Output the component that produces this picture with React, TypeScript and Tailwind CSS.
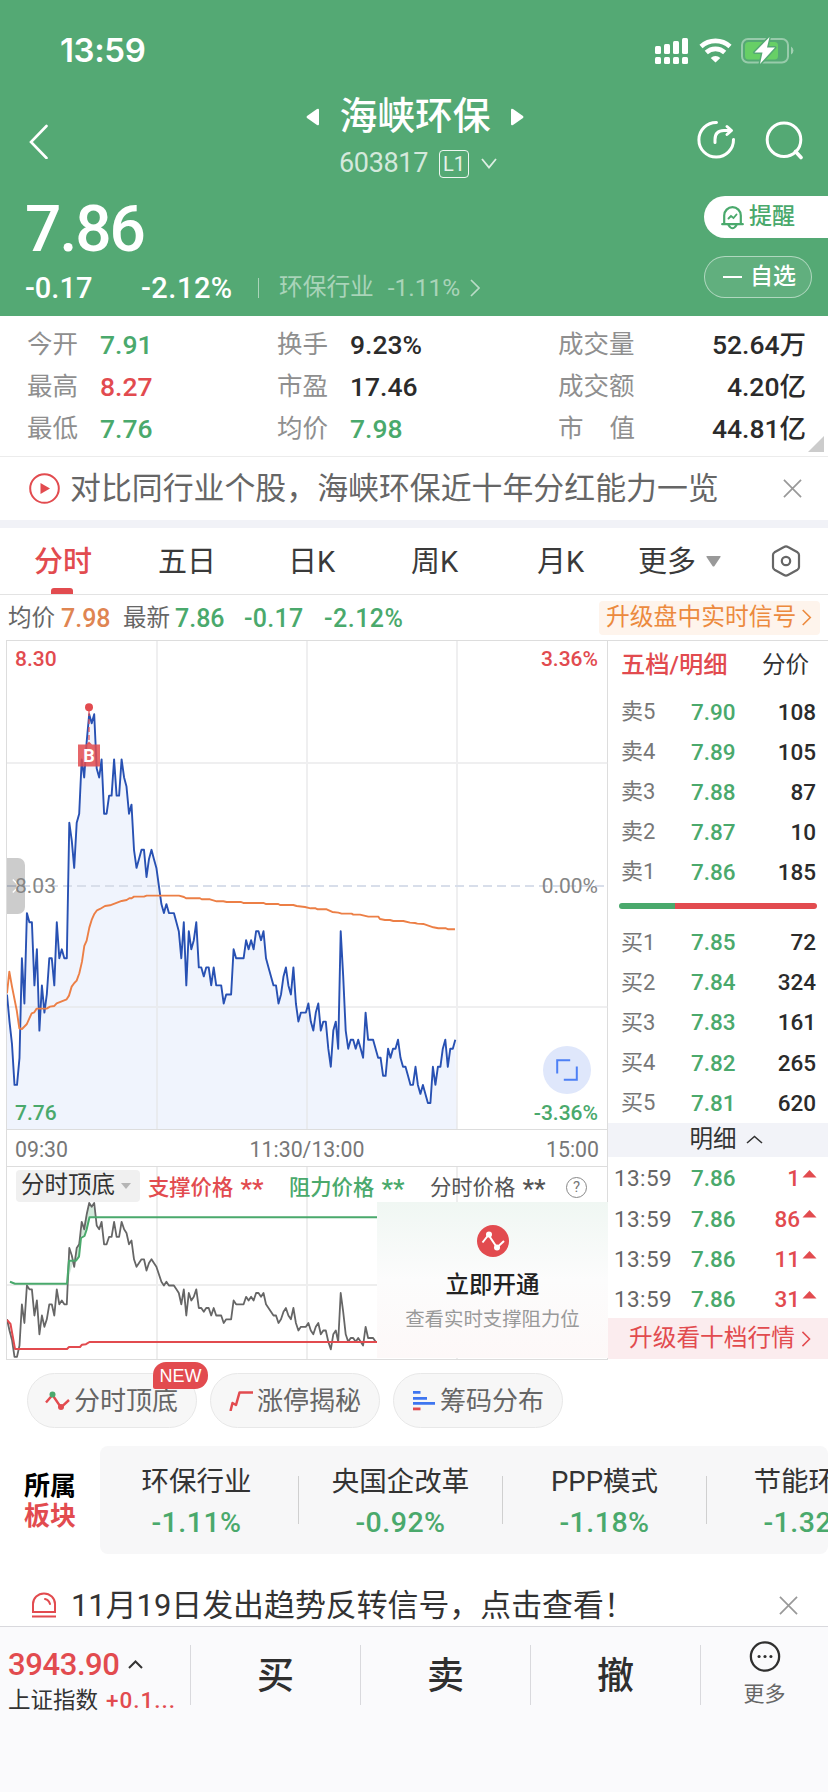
import { ReactNode } from "react";

const SELLS = [
  ["卖5", "7.90", "108"],
  ["卖4", "7.89", "105"],
  ["卖3", "7.88", "87"],
  ["卖2", "7.87", "10"],
  ["卖1", "7.86", "185"],
];

const BUYS = [
  ["买1", "7.85", "72"],
  ["买2", "7.84", "324"],
  ["买3", "7.83", "161"],
  ["买4", "7.82", "265"],
  ["买5", "7.81", "620"],
];

const TRADES = ["1", "86", "11", "31"];

const SECTORS = [
  ["环保行业", "-1.11%"],
  ["央国企改革", "-0.92%"],
  ["PPP模式", "-1.18%"],
  ["节能环保", "-1.32%"],
];

// one value per minute, in cents away from yesterday's close (8.03)
const TICKS = [
  -12, -15, -17.5, -22, -22, -19, -8, -13, -3, -4, -4, -11, -7, -16, -11, -14, -12, -8, -8, -11, -4, -8, -7, -8, -8,
  7, 5, 2, 7, 8, 14, 12, 16, 19, 18, 19, 13, 12, 14, 8, 8, 10, 10, 14, 10, 10, 14, 12, 11, 8, 9, 4, 2, 3, 4, 4, 1, 3,
  4, 3, 2, 0, -2, -3, -2, -3, -3, -3, -4, -5, -8, -4, -11, -5, -7, -6, -4, -9, -9, -10, -9, -9, -11, -9, -11, -11,
  -11, -13, -12, -12, -12, -7, -8, -8, -8, -8, -6, -7, -6, -7, -5, -5, -6, -5, -8, -9, -10, -11, -11, -13, -12, -10,
  -9, -11, -12, -9, -13, -15, -14, -14, -14, -13, -15, -16, -14, -13, -16, -15, -15, -18, -20, -16, -15, -18, -5,
  -10, -16, -18, -17, -17, -18, -17, -18, -19, -14, -17, -17, -17, -18, -19, -19, -21, -21, -18, -19, -18, -18, -17,
  -19, -20, -20, -21, -22, -22, -20, -22, -23, -22, -23, -24, -24, -20, -22, -20, -20, -18, -17, -20, -18, -18, -17,
];

const STEP = 448.3 / (TICKS.length - 1);
const priceLine = TICKS.map((t, i) => `${(7 + i * STEP).toFixed(1)},${(886 - t * 9.04).toFixed(1)}`).join(" ");
// the lower panel is locked right of x=377, so its line stops there
const subLine = TICKS.slice(0, 149)
  .map((t, i) => `${(7 + i * STEP).toFixed(1)},${(1203 + (19 - t) * 3.75).toFixed(1)}`)
  .join(" ");

const AVG_LINE =
  "21,1090 28,1025 36,1070 50,1140 58,1195 66,1197 80,1183 95,1150 103,1147 110,1136 140,1136 150,1130 163,1128 170,1120 200,1108 207,1097 215,1070 223,1059 230,1052 238,1030 246,995 253,948 260,932 268,893 275,870 283,852 291,841 300,837 315,828 330,826 365,813 380,810 388,805 395,805 402,800 432,800 440,797 537,797 552,801 558,805 600,805 605,808 630,808 650,814 670,814 680,816 722,816 730,819 790,819 797,822 835,822 840,825 880,825 890,828 915,831 932,835 947,835 953,838 980,838 997,846 1015,848 1025,851 1055,851 1060,854 1080,854 1105,860 1135,860 1140,867 1155,870 1170,870 1180,873 1210,873 1230,878 1245,879 1252,881 1270,882 1300,892 1315,895 1338,895 1345,898 1365,898";

function Chevron({ className }: { className?: string }) {
  return (
    <svg viewBox="0 0 10 18" className={className} fill="none" stroke="currentColor" strokeWidth="1.7">
      <path d="M1 1l8 8-8 8" />
    </svg>
  );
}

function Close({ className }: { className?: string }) {
  return (
    <svg viewBox="0 0 20 20" className={className} fill="none" stroke="#999" strokeWidth="1.8">
      <path d="M1 1l18 18M19 1L1 19" />
    </svg>
  );
}

function StatusBar() {
  return (
    <div className="flex h-[91px] items-center justify-between pt-[10px] pr-[33px] pl-[60px]">
      <span className="font-['Inter'] text-[33px] font-semibold tracking-[-0.4px]">13:59</span>
      <svg width="140" height="28" viewBox="655 36 140 28" fill="#fff">
        <rect x="655" y="45" width="6" height="8" rx="1.5" />
        <rect x="664" y="43" width="6" height="10" rx="1.5" />
        <rect x="673" y="40" width="6" height="13" rx="1.5" />
        <rect x="682" y="37" width="6" height="16" rx="1.5" />
        <rect x="655" y="56" width="6" height="7" rx="1.5" />
        <rect x="664" y="56" width="6" height="7" rx="1.5" />
        <rect x="673" y="56" width="6" height="7" rx="1.5" />
        <rect x="682" y="56" width="6" height="7" rx="1.5" />
        <g fill="none" stroke="#fff" strokeWidth="4.6">
          <path d="M701 45.5a21.5 21.5 0 0 1 29 0" />
          <path d="M706.3 51.5a13.5 13.5 0 0 1 18.4 0" />
        </g>
        <path d="M710.7 57a7 7 0 0 1 9.6 0l-4.800 4.400z" />
        <rect x="742" y="38" width="46" height="23.5" rx="6" fill="none" stroke="#fff" strokeOpacity=".4" strokeWidth="2" />
        <path d="M791 45.5v8a4.500 4.500 0 0 0 0-8z" opacity=".45" />
        <rect x="745" y="41" width="33" height="17.5" rx="3.5" fill="#67cf66" />
        <path
          d="M769.5 36l-15 15.500h8l-2.500 11.500 15-16.500h-8z"
          stroke="#54a974"
          strokeWidth="3"
          paintOrder="stroke"
          strokeLinejoin="round"
        />
      </svg>
    </div>
  );
}

function Header() {
  return (
    <header className="h-[316px] bg-[#54a974] text-white">
      <StatusBar />
      <div className="flex h-24 items-center justify-between pr-[25px] pl-[29px]">
        <svg className="mt-[3px]" width="98" height="36" viewBox="29 122 98 36" fill="none" stroke="#fff" strokeWidth="2.6">
          <path d="M46.5 125l-15.500 16 15.500 16" strokeLinecap="round" />
        </svg>
        <div className="flex flex-col items-center pl-[6px]">
          <div className="flex h-12 items-center gap-[20px] pt-[3px]">
            <svg width="13" height="18" viewBox="0 0 13 18" fill="#fff">
              <path d="M13 2v14q0 2-2 1L1 10q-1-1 0-2L11 1q2-1 2 1z" />
            </svg>
            <h1 className="text-[37.8px] leading-none font-medium">海峡环保</h1>
            <svg width="13" height="18" viewBox="0 0 13 18" fill="#fff">
              <path d="M0 2v14q0 2 2 1l10-7q1-1 0-2L2 1Q0 0 0 2z" />
            </svg>
          </div>
          <div className="flex h-12 items-center pt-px pl-1.5">
            <span className="text-[27px] tracking-[-0.35px] text-white/75">603817</span>
            <span className="ml-[11px] flex h-7 w-[30px] items-center justify-center rounded-[4px] border border-white/90 text-[20px] text-white/85">
              L1
            </span>
            <svg className="ml-3 text-white/80" width="16" height="11" viewBox="0 0 16 11" fill="none" stroke="currentColor" strokeWidth="1.8">
              <path d="M1 1l7 8.500L15 1" />
            </svg>
          </div>
        </div>
        <svg
          className="mt-[2px]"
          width="106"
          height="42"
          viewBox="697 119 106 42"
          fill="none"
          stroke="#fff"
          strokeWidth="3"
          strokeLinecap="round"
        >
          <path d="M716.5 122.500a17.300 17.300 0 1 0 17 17" />
          <path d="M715 142.500v-3c0-6 3-9 9-9h6" />
          <path d="M727 126.500l4.500 4-4.500 4" strokeLinejoin="round" />
          <circle cx="784" cy="139.8" r="16.8" />
          <path d="M795.5 151.500l5.500 6" strokeWidth="3.6" />
        </svg>
      </div>
      <div className="flex h-[129px] justify-between">
        <div className="pl-[25px]">
          <div className="flex h-[82px] items-center pt-[4px] text-[64px] leading-none font-medium tracking-[-2px]">7.86</div>
          <div className="flex h-9 items-center pt-[2px] text-[29px] leading-none font-medium">
            <span className="w-[116px]">-0.17</span>
            <span className="w-[117px] tracking-[0.5px]">-2.12%</span>
            <span className="h-5 w-px bg-white/50" />
            <span className="ml-5 text-[23.7px] font-normal text-white/50">环保行业</span>
            <span className="ml-3.5 text-[24.5px] font-normal text-white/50">-1.11%</span>
            <Chevron className="ml-2.5 h-[18px] w-2.5 text-white/60" />
          </div>
        </div>
        <div className="flex w-[124px] flex-col gap-[18px] pt-[9px]">
          <div className="flex h-[42px] items-center rounded-l-full bg-white pl-[17px] text-[23px] font-medium text-[#4aa96c]">
            <svg width="23" height="25" viewBox="0 0 23 25" fill="none" stroke="currentColor" strokeWidth="2.2" strokeLinecap="round">
              <path d="M3.2 19V10.500a8.300 8.300 0 0 1 16.600 0V19M1.200 19.200h20.600" />
              <path d="M7.500 20q4 6.500 8 0" />
              <path d="M7.500 13.500l2.500-2.500 2.500 2 3-3.500" strokeWidth="1.9" />
            </svg>
            <span className="ml-[5px]">提醒</span>
          </div>
          <div className="flex h-[42px] w-[108px] items-center rounded-full border border-white/50 bg-white/8 pl-[18px] text-[23px] font-medium">
            <span className="h-[2px] w-[19px] bg-white" />
            <span className="ml-2 pt-px">自选</span>
          </div>
        </div>
      </div>
    </header>
  );
}

function Stat({ label, value, color }: { label: string; value: string; color: string }) {
  return (
    <div className="flex h-[42px] items-center">
      <span className="w-[73px] text-[25.5px] text-[#8f8f8f]">{label}</span>
      <span className={`pt-px text-[26.5px] font-medium ${color}`}>{value}</span>
    </div>
  );
}

function WideStat({ label, value }: { label: ReactNode; value: string }) {
  return (
    <div className="flex h-[42px] items-center justify-between">
      <span className="flex w-[77px] justify-between text-[25.5px] text-[#8f8f8f]">{label}</span>
      <span className="pt-px text-[26.5px] font-medium text-[#2b2b2b]">{value}</span>
    </div>
  );
}

function Stats() {
  return (
    <section className="relative flex h-[141px] border-b border-[#ececec] pt-[8px] pr-[22px] pl-[27px] leading-none">
      <div className="w-[250px]">
        <Stat label="今开" value="7.91" color="text-[#4aa96c]" />
        <Stat label="最高" value="8.27" color="text-[#e24b4f]" />
        <Stat label="最低" value="7.76" color="text-[#4aa96c]" />
      </div>
      <div className="w-[281px]">
        <Stat label="换手" value="9.23%" color="text-[#2b2b2b]" />
        <Stat label="市盈" value="17.46" color="text-[#2b2b2b]" />
        <Stat label="均价" value="7.98" color="text-[#4aa96c]" />
      </div>
      <div className="flex-1">
        <WideStat label="成交量" value="52.64万" />
        <WideStat label="成交额" value="4.20亿" />
        <WideStat label={<><i className="not-italic">市</i><i className="not-italic">值</i></>} value="44.81亿" />
      </div>
      <svg className="absolute right-1 bottom-1" width="16" height="16" viewBox="0 0 16 16" fill="#ccc">
        <path d="M16 0v16H0z" />
      </svg>
    </section>
  );
}

function Tabs() {
  return (
    <nav className="flex h-[67px] items-center border-b border-[#e3e3e3] text-[29px] leading-none text-[#3a3a3a]">
      <span className="relative ml-[34px] w-[124px] pt-[2px] font-medium text-[#e24b4f]">
        分时
        <i className="absolute top-[42px] left-[17px] h-1.5 w-[22px] rounded-t-[3px] bg-[#e24b4f]" />
      </span>
      <span className="w-[130px] pt-[2px]">五日</span>
      <span className="w-[123px] pt-[2px]">日K</span>
      <span className="w-[126px] pt-[2px]">周K</span>
      <span className="w-[101px] pt-[2px]">月K</span>
      <span className="pt-[2px]">更多</span>
      <svg className="ml-[10px]" width="15" height="11" viewBox="0 0 15 11" fill="#999">
        <path d="M1 0h13q1 0 .5 1L8.500 10q-1 1-2 0L.5 1Q0 0 1 0z" />
      </svg>
      <svg className="ml-[50px]" width="30" height="32" viewBox="0 0 30 32" fill="none" stroke="#666" strokeWidth="2.2">
        <path d="M13 2q2-1.200 4 0l9.500 5.300q1.500 1 1.500 2.700v12q0 1.700-1.500 2.700L17 30q-2 1.200-4 0l-9.500-5.300Q2 23.700 2 22V10q0-1.700 1.500-2.700z" />
        <circle cx="15" cy="16" r="4.2" />
      </svg>
    </nav>
  );
}

function PriceChart() {
  return (
    <div className="relative h-[488px] text-[21px] leading-none font-medium">
      <svg className="block" width="601" height="488" viewBox="7 641 601 488" fill="none">
        <polygon points={`${priceLine} 457,1129 7,1129`} fill="#f0f4fd" />
        <path d="M157 641v488M307 641v488M457 641v488M7 763h601M7 1007h601" stroke="#e4e4e6" strokeOpacity=".6" strokeWidth="2" />
        <path d="M7 886h601" stroke="#d8deea" strokeWidth="1.8" strokeDasharray="9 5" />
        <polyline points={priceLine} stroke="#2851b3" strokeWidth="1.9" strokeLinejoin="round" />
        <polyline points={AVG_LINE} transform="translate(0 630) scale(.3333)" stroke="#ec7f46" strokeWidth="5.7" strokeLinejoin="round" />
        <path d="M89 711v33" stroke="#e24b4f" strokeOpacity=".8" strokeWidth="1.5" strokeDasharray="5 3" />
        <circle cx="89" cy="707.3" r="4" fill="#e24b4f" />
        <path d="M78 744.500h8l3-3 3 3h8v22H78z" fill="#e24b4f" fillOpacity=".85" />
      </svg>
      <div className="absolute top-[217px] left-0 flex h-14 w-[18px] items-center justify-center rounded-r-[7px] bg-black/20">
        <Chevron className="h-[18px] w-2 text-white" />
      </div>
      <span className="absolute top-[106px] left-[71px] w-[22px] text-center text-[18px] font-bold text-white">B</span>
      <span className="absolute top-[8px] left-[8px] text-[#e24b4f]">8.30</span>
      <span className="absolute top-[8px] right-[9px] text-[#e24b4f]">3.36%</span>
      <span className="absolute top-[235px] left-[8px] font-normal text-[#858585]">8.03</span>
      <span className="absolute top-[235px] right-[9px] font-normal text-[#858585]">0.00%</span>
      <span className="absolute top-[462px] left-[8px] text-[#4aa96c]">7.76</span>
      <span className="absolute top-[462px] right-[9px] text-[#4aa96c]">-3.36%</span>
      <div className="absolute top-[405px] left-[536px] flex h-12 w-12 items-center justify-center rounded-full bg-[#dfe7fb]">
        <svg width="22" height="22" viewBox="0 0 22 22" fill="none" stroke="#4e80f5" strokeWidth="2">
          <path d="M1.200 14.500V1.200h13M20.800 7.500v13.300h-13" />
        </svg>
      </div>
    </div>
  );
}

function Stars() {
  return <span className="ml-0.5 inline-block translate-y-[3px] text-[26px] font-medium">**</span>;
}

function SubChart() {
  return (
    <div className="relative h-[192px]">
      <svg className="block" width="601" height="192" viewBox="7 1167 601 192" fill="none">
        <path d="M157 1167v192M307 1167v192M457 1167v192M7 1285h601" stroke="#eeeeee" strokeWidth="2" />
        <path d="M67 1284l2-23h7l3-4 2-19 3.500-2 2-6 3-13h7l-3-10-4-4z" fill="#4aa96c" fillOpacity=".25" />
        <polyline points={subLine} stroke="#666" strokeWidth="1.8" strokeLinejoin="round" />
        <path
          d="M10 1281.700l5 2h52l2-23h7l3-4 2-18.700 3.500-2 2-6 3-12.700H380"
          stroke="#4aa96c"
          strokeWidth="2"
          strokeLinejoin="round"
        />
        <path
          d="M7 1320l3.500 4 4.500 25h52l2-2h11l2-2.300 4-.5 3.500-2.200H380"
          stroke="#e24b4f"
          strokeWidth="2"
          strokeLinejoin="round"
        />
      </svg>
      <div className="absolute top-[3px] left-[9px] flex h-8 items-center text-[21.3px] leading-none">
        <span className="flex h-8 w-[124px] items-center rounded-[4px] bg-[#f0f0f0] pl-[5px] text-[23.5px] text-[#333]">
          分时顶底
          <svg className="ml-[6px]" width="10" height="6" viewBox="0 0 10 6" fill="#b5b5b5">
            <path d="M0 0h10L5 6z" />
          </svg>
        </span>
        <span className="ml-2 w-[141px] font-medium text-[#e24b4f]">支撑价格 <Stars /></span>
        <span className="w-[141px] font-medium text-[#4aa96c]">阻力价格 <Stars /></span>
        <span className="w-[136px] text-[#555]">分时价格 <Stars /></span>
        <span className="mt-[3px] flex h-[21px] w-[21px] items-center justify-center rounded-full border-[1.5px] border-[#888] text-[15px] text-[#777]">
          ?
        </span>
      </div>
      <div className="absolute top-[35px] left-[370px] flex h-[156px] w-[231px] flex-col items-center bg-linear-to-b from-[#f0f7f3] via-[#fcfcfc] to-[#fdf8f8] leading-none">
        <svg className="mt-[23px]" width="32" height="32" viewBox="0 0 32 32">
          <circle cx="16" cy="16" r="16" fill="#e24b4f" />
          <path d="M5.500 17.500l6-7.500 8.500 12.500 7-6.500" fill="none" stroke="#fff" strokeWidth="2" />
          <circle cx="12" cy="9.5" r="3" fill="#fff" />
          <circle cx="20" cy="22.5" r="3" fill="#fff" />
        </svg>
        <span className="mt-[17px] text-[23.5px] font-medium text-[#222]">立即开通</span>
        <span className="mt-[12px] text-[19.4px] text-[#999]">查看实时支撑阻力位</span>
      </div>
    </div>
  );
}

function BookRows({ rows }: { rows: string[][] }) {
  return (
    <>
      {rows.map(([label, price, qty]) => (
        <div key={label} className="flex h-[40.1px] items-center pr-[12px] pl-[13px]">
          <span className="w-[70px] text-[22px] text-[#777]">{label}</span>
          <span className="flex-1 text-[22.5px] font-medium text-[#4aa96c]">{price}</span>
          <span className="text-[22.5px] font-medium text-[#2b2b2b]">{qty}</span>
        </div>
      ))}
    </>
  );
}

function OrderBook() {
  return (
    <aside className="h-[720px] flex-1 border-t border-[#ddd] leading-none">
      <div className="flex h-[51px] items-center justify-between pr-[19px] pb-[2px] pl-[13px]">
        <span className="text-[24.3px] font-medium text-[#e24b4f]">五档/明细</span>
        <span className="text-[23.5px] text-[#333]">分价</span>
      </div>
      <BookRows rows={SELLS} />
      <div className="flex h-[30px] px-[11px] pt-[11px]">
        <span className="h-[6px] w-[56px] rounded-l-full bg-[#4aa96c]" />
        <span className="h-[6px] flex-1 rounded-r-full bg-[#e24b4f]" />
      </div>
      <BookRows rows={BUYS} />
      <div className="flex h-[34px] items-center justify-center bg-[#f2f3f8] pl-[16px] text-[23.5px] text-[#333]">
        明细
        <svg className="ml-[9px]" width="17" height="9" viewBox="0 0 17 9" fill="none" stroke="#333" strokeWidth="1.6">
          <path d="M1 8l7.500-6.500L16 8" />
        </svg>
      </div>
      {TRADES.map((qty) => (
        <div key={qty} className="flex h-[40.3px] items-center pt-[3px] pr-[11px] pl-[6px] text-[22.5px]">
          <span className="w-[77px] tracking-[0.4px] text-[#666]">13:59</span>
          <span className="flex-1 font-medium text-[#4aa96c]">7.86</span>
          <span className="font-medium text-[#e24b4f]">{qty}</span>
          <svg className="mb-[9px] ml-[2px]" width="15" height="8" viewBox="0 0 14 8" fill="#e24b4f">
            <path d="M7 0l7 7.500H0z" />
          </svg>
        </div>
      ))}
      <div className="flex h-[41px] items-center bg-[#fbecee] pl-[21px] text-[23.7px] text-[#e24b4f]">
        升级看十档行情
        <Chevron className="ml-[6px] h-[16px] w-[10px]" />
      </div>
    </aside>
  );
}

function Tool({ icon, children, badge }: { icon: ReactNode; children: ReactNode; badge?: string }) {
  return (
    <div className="relative flex h-[55px] w-[170px] items-center rounded-full border border-[#e8e8e8] bg-[#f7f7f7] pl-[17px] text-[26px] leading-none text-[#666]">
      {icon}
      <span className="ml-[4px] pt-px">{children}</span>
      {badge && (
        <span className="absolute -top-[12px] left-[125px] flex h-[27px] w-[55px] items-center justify-center rounded-[13px] rounded-bl-[2px] bg-[#e24b4f] font-['Liberation_Sans'] text-[18px] text-white">
          {badge}
        </span>
      )}
    </div>
  );
}

function Tools() {
  return (
    <section className="flex h-[86px] gap-[13px] pt-[13px] pl-[27px]">
      <Tool
        badge="NEW"
        icon={
          <svg width="25" height="20" viewBox="0 0 25 20" fill="none" stroke="#e24b4f" strokeWidth="2.4">
            <path d="M1 11.500l6.500-7.500 8.500 12.500 8-7.500" />
            <circle cx="7.5" cy="3.5" r="3" fill="#4aa96c" stroke="none" />
            <circle cx="16" cy="16" r="3" fill="#e24b4f" stroke="none" />
          </svg>
        }
      >
        分时顶底
      </Tool>
      <Tool
        icon={
          <svg width="25" height="20" viewBox="0 0 25 20" fill="none" stroke="#e24b4f" strokeWidth="2.5" strokeLinejoin="round">
            <path d="M2.500 20l2-8 3.500 2 3.500-12.500H25" />
          </svg>
        }
      >
        涨停揭秘
      </Tool>
      <Tool
        icon={
          <svg width="25" height="20" viewBox="0 0 25 20" fill="#3f76f0">
            <path d="M2 0h7.500v2.800H2zM2 6h14v2.800H2zM2 11h22v2.800H2z" />
            <path d="M2 16.500h7.500v2.800H2z" fill="#e24b4f" />
          </svg>
        }
      >
        筹码分布
      </Tool>
    </section>
  );
}

function Sectors() {
  return (
    <section className="flex h-[108px] items-center leading-none">
      <div className="flex w-[100px] shrink-0 flex-col gap-[4px] pt-[2px] pl-[24px] text-[26px] font-bold text-black">
        <span>所属</span>
        <span className="text-[#e24b4f]">板块</span>
      </div>
      <div className="flex h-full flex-1 items-center overflow-hidden rounded-[8px] bg-[#f7f7f8]">
        {SECTORS.map(([name, change], i) => (
          <div
            key={name}
            className={`flex w-[204px] shrink-0 items-center justify-between ${i === 0 ? "-ml-[5px]" : ""}`}
          >
            <div className="flex flex-1 flex-col items-center gap-[14px] pt-[5px]">
              <span className="text-[27.5px] text-[#333]">{name}</span>
              <span className="text-[28.5px] font-medium tracking-[0.5px] text-[#4aa96c]">{change}</span>
            </div>
            <span className="h-12 w-px bg-[#d0d0d0]" />
          </div>
        ))}
      </div>
    </section>
  );
}

function BottomBar() {
  return (
    <footer className="flex h-[166px] border-t border-[#d9d9dd] bg-[#fafafc] pt-[18px] leading-none">
      <div className="flex h-[62px] w-[190px] flex-col pt-[4px] pl-[8px]">
        <div className="flex items-center text-[31px] font-medium tracking-[-0.4px] text-[#e24b4f]">
          3943.90
          <svg className="ml-[8px]" width="15" height="9" viewBox="0 0 15 9" fill="none" stroke="#333" strokeWidth="2">
            <path d="M1 8l6.500-6.500L14 8" />
          </svg>
        </div>
        <div className="mt-[9px] flex items-center text-[22.5px] text-[#333]">
          上证指数<span className="ml-[8px] font-medium tracking-[1px] text-[#e24b4f]">+0.1...</span>
        </div>
      </div>
      {["买", "卖", "撤"].map((action) => (
        <div
          key={action}
          className="flex h-[60px] w-[170px] items-center justify-center border-l border-[#d9d9dd] pt-[2px] text-[37px] font-medium text-[#2f2f2f]"
        >
          {action}
        </div>
      ))}
      <div className="flex h-[60px] flex-1 flex-col items-center border-l border-[#d9d9dd] text-[21px] text-[#666]">
        <svg className="-mt-[4px]" width="34" height="34" viewBox="0 0 34 34">
          <circle cx="17" cy="17" r="15.5" fill="none" stroke="#2f2f2f" strokeWidth="2.5" />
          <g fill="#2f2f2f">
            <circle cx="10.5" cy="17" r="1.7" />
            <circle cx="17" cy="17" r="1.7" />
            <circle cx="23.5" cy="17" r="1.7" />
          </g>
        </svg>
        <span className="mt-[12px]">更多</span>
      </div>
    </footer>
  );
}

export default function App() {
  return (
    <div className="h-[1792px] w-[828px] overflow-hidden bg-white font-['Roboto','Noto_Sans_CJK_SC',sans-serif] whitespace-nowrap">
      <Header />
      <Stats />
      <div className="flex h-[63px] items-center pr-[26px] pl-[29px] leading-none">
        <svg width="31" height="31" viewBox="0 0 31 31" fill="none" stroke="#e24b4f" strokeWidth="2">
          <circle cx="15.5" cy="15.5" r="14.3" />
          <path d="M11.500 10l9.500 5.500-9.500 5.500z" fill="#e24b4f" stroke="none" />
        </svg>
        <span className="ml-[10px] flex-1 pt-[2px] text-[30.9px] text-[#666]">对比同行业个股，海峡环保近十年分红能力一览</span>
        <Close className="h-[19px] w-[19px]" />
      </div>
      <div className="h-2 bg-[#f1f2f7]" />
      <Tabs />
      <div className="flex h-[45px] items-center pr-[8px] pl-[8px] text-[25px] leading-none font-medium text-[#4aa96c]">
        <span className="w-[53px] pt-[2px] text-[23.5px] font-normal text-[#666]">均价</span>
        <span className="w-[62px] pt-[2px] text-[#df8552]">7.98</span>
        <span className="w-[52px] pt-[2px] text-[23.5px] font-normal text-[#666]">最新</span>
        <span className="w-[69px] pt-[2px]">7.86</span>
        <span className="w-[80px] pt-[2px] tracking-[0.3px]">-0.17</span>
        <span className="flex-1 pt-[2px] tracking-[0.5px]">-2.12%</span>
        <span className="flex h-[34px] w-[221px] items-center rounded-[4px] bg-[#fef4ec] pl-[7px] text-[23.8px] font-normal text-[#ec8a3e]">
          升级盘中实时信号
          <Chevron className="ml-[5px] h-[17px] w-[11px]" />
        </span>
      </div>
      <div className="flex">
        <div className="ml-[6px] h-[720px] w-[602px] shrink-0 border border-[#ddd]">
          <PriceChart />
          <div className="flex h-[38px] items-center justify-between border-y border-[#ddd] pt-[3px] pr-[8px] pl-[8px] text-[21.3px] text-[#777]">
            <span>09:30</span>
            <span>11:30/13:00</span>
            <span>15:00</span>
          </div>
          <SubChart />
        </div>
        <OrderBook />
      </div>
      <Tools />
      <Sectors />
      <div className="flex h-[72px] items-center pt-[33px] pr-[30px] pl-[31px] leading-none">
        <svg className="-mt-[3px]" width="26" height="26" viewBox="0 0 26 26" fill="none" stroke="#e24b4f" strokeWidth="2">
          <path d="M2 20v-8a11 10.500 0 0 1 22 0v8zM1 24.500h24" />
          <path d="M14 7q4 1 5 5" strokeLinecap="round" />
        </svg>
        <span className="ml-[14px] flex-1 text-[30.9px] text-[#333]">11月19日发出趋势反转信号，点击查看！</span>
        <Close className="-mt-[3px] h-[19px] w-[19px]" />
      </div>
      <BottomBar />
    </div>
  );
}
